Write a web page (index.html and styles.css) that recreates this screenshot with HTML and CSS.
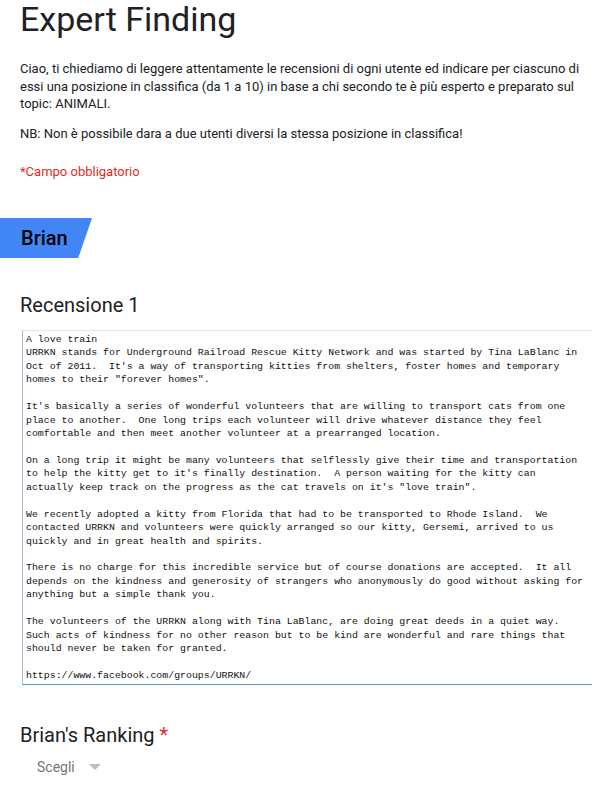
FILE: index.html
```html
<!DOCTYPE html>
<html lang="it">
<head>
<meta charset="utf-8">
<link rel="stylesheet" href="styles.css">
</head>
<body>
<div class="page">
  <header class="intro">
    <h1 class="title">Expert Finding</h1>
    <p class="desc">Ciao, ti chiediamo di leggere attentamente le recensioni di ogni utente ed indicare per ciascuno di essi una posizione in classifica (da 1 a 10) in base a chi secondo te è più esperto e preparato sul topic: ANIMALI.</p>
    <p class="desc">NB: Non è possibile dara a due utenti diversi la stessa posizione in classifica!</p>
    <p class="required">*Campo obbligatorio</p>
  </header>

  <div class="section-tab"><span>Brian</span></div>

  <section class="item">
    <h2 class="item-title">Recensione 1</h2>
    <div class="review">A love train
URRKN stands for Underground Railroad Rescue Kitty Network and was started by Tina LaBlanc in
Oct of 2011.  It's a way of transporting kitties from shelters, foster homes and temporary
homes to their "forever homes".

It's basically a series of wonderful volunteers that are willing to transport cats from one
place to another.  One long trips each volunteer will drive whatever distance they feel
comfortable and then meet another volunteer at a prearranged location.

On a long trip it might be many volunteers that selflessly give their time and transportation
to help the kitty get to it's finally destination.  A person waiting for the kitty can
actually keep track on the progress as the cat travels on it's "love train".

We recently adopted a kitty from Florida that had to be transported to Rhode Island.  We
contacted URRKN and volunteers were quickly arranged so our kitty, Gersemi, arrived to us
quickly and in great health and spirits.

There is no charge for this incredible service but of course donations are accepted.  It all
depends on the kindness and generosity of strangers who anonymously do good without asking for
anything but a simple thank you.

The volunteers of the URRKN along with Tina LaBlanc, are doing great deeds in a quiet way.
Such acts of kindness for no other reason but to be kind are wonderful and rare things that
should never be taken for granted.

https://www.facebook.com/groups/URRKN/</div>
  </section>

  <section class="item ranking">
    <h2 class="item-title">Brian's Ranking <span class="star">*</span></h2>
    <div class="select">
      <span class="select-label">Scegli</span>
      <svg class="select-arrow" width="12" height="6" viewBox="0 0 12 6"><path d="M0 0 L12 0 L6 6 Z" fill="#bdbdbd"/></svg>
    </div>
  </section>
</div>
</body>
</html>
```

FILE: styles.css
```css
html, body {
  margin: 0;
  padding: 0;
  background: #ffffff;
}

body {
  font-family: Roboto, "Liberation Sans", Arial, sans-serif;
  color: #202124;
}

.page {
  width: 610px;
  overflow: hidden;
}

.intro {
  padding: 0 20px;
}

.title {
  margin: 0;
  font-size: 34px;
  font-weight: 400;
  line-height: 38px;
  color: #202124;
}

.desc {
  margin: 22px 0 0;
  font-size: 13px;
  line-height: 17.5px;
}

.desc + .desc {
  margin-top: 12px;
}

.required {
  margin: 21px 0 0;
  font-size: 13px;
  line-height: 17px;
  color: #d93025;
}

.section-tab {
  margin-top: 38px;
  display: flex;
}

.section-tab span {
  display: block;
  height: 40px;
  line-height: 40px;
  padding: 0 30px 0 21px;
  width: 41px;
  background: #4285f4;
  clip-path: polygon(0 0, 100% 0, 85% 100%, 0 100%);
  font-size: 20px;
  font-weight: 500;
  color: #000;
}

.item {
  padding: 0 0 0 20px;
}

.item-title {
  margin: 33px 0 0;
  font-size: 20px;
  font-weight: 400;
  line-height: 28px;
  color: #202124;
}

.review {
  margin: 11px 0 0 2px;
  width: 570px;
  height: 355px;
  box-sizing: border-box;
  padding: 2px 0 0 3px;
  border-top: 1px solid #e6e6e6;
  border-left: 1px solid #a9bdd6;
  border-bottom: 1px solid #5b8fc9;
  white-space: pre;
  font-family: "Liberation Mono", "DejaVu Sans Mono", monospace;
  font-size: 9.9px;
  line-height: 13.44px;
  color: #111111;
  overflow: hidden;
}

.ranking .item-title {
  margin-top: 36px;
}

.star {
  color: #d93025;
}

.select {
  display: flex;
  align-items: center;
  gap: 14px;
  margin: 8px 0 0 17px;
  height: 20px;
}

.select-label {
  font-size: 14px;
  color: #757575;
}

.select-arrow {
  display: block;
}
```
